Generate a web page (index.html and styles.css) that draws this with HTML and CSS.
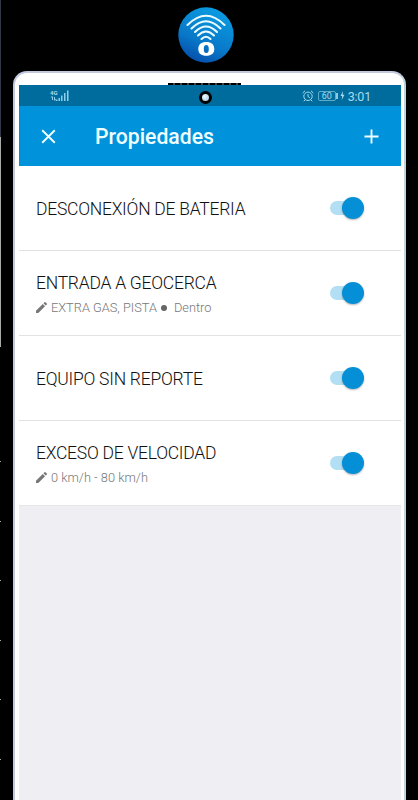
FILE: index.html
```
<!DOCTYPE html>
<html lang="es">
<head>
<meta charset="utf-8">
<title>Propiedades</title>
<link rel="stylesheet" href="styles.css">
</head>
<body>
<div class="edge"><i></i><i></i><i></i><i></i><i></i><i></i></div>
<svg class="logo" viewBox="0 0 56 56">
  <defs><linearGradient id="g" x1=".2" y1="1" x2=".65" y2="0"><stop offset="0" stop-color="#0649a8"/><stop offset=".4" stop-color="#0878c8"/><stop offset="1" stop-color="#0a9ce2"/></linearGradient></defs>
  <circle cx="28" cy="28" r="27.7" fill="url(#g)"/>
  <g fill="none" stroke="#e9fbff" stroke-width="2.100" stroke-linecap="round">
    <path d="M9.500 18Q28-.5 46.500 18"/>
    <path d="M13.500 21.500Q28 7 42.500 21.500"/>
    <path d="M17 25Q28 14 39 25"/>
    <path d="M20 28.500Q28 20.500 36 28.500"/>
    <path d="M23.500 32Q28 27.500 32.500 32"/>
  </g>
  <path fill="#fff" fill-rule="evenodd" d="M28.300 35c5 0 8 2.500 8 7s-3 6.800-8 6.800-8-2.300-8-6.800 3-7 8-7zm0 3c-1.800 0-2.500 1.500-2.500 4s.7 3.900 2.500 3.900 2.500-1.400 2.500-3.900-.7-4-2.500-4z"/>
</svg>
<main class="phone">
  <div class="speaker"></div>
  <div class="camera"></div>
  <div class="screen">
    <div class="status">
      <div class="network"><span class="gen">4G</span>
        <svg viewBox="0 0 19 12"><g fill="#8fd0e8"><path d="M1 7l1-1 1 1v3H2V8zM4 7h1v2h1l-1 2-1-1z"/><path d="M6 9.500h1.500V11H6zM8.500 8H10v3H8.500zM11 5.500h1.500V11H11zM14 3h1.500v8H14zM17 .5h1.500V11H17z"/></g></svg>
      </div>
      <div class="info">
        <svg class="alarm" viewBox="0 0 12 12" fill="none" stroke="#a6dcec"><circle cx="6" cy="6.300" r="4.200"/><path d="M6 4v2.500l1.800 1.200M.7 3L3 .8M11.300 3L9 .8M3 10l-1.200 1.300M9 10l1.200 1.300"/></svg>
        <span class="battery">60</span>
        <svg class="bolt" viewBox="0 0 5 9"><path d="M3 0L.5 5H2.200L1.700 9 4.500 3.800H2.700z" fill="#a6dcec"/></svg>
        <span class="time">3:01</span>
      </div>
    </div>
    <header class="bar">
      <svg class="close" viewBox="0 0 16 16"><path d="M1.300 1.300l13.400 13.400M14.700 1.300L1.300 14.700"/></svg>
      <h1>Propiedades</h1>
      <svg class="add" viewBox="0 0 16 16"><path d="M8 .5v15M.5 8h15"/></svg>
    </header>
    <section class="row"><div><h2>DESCONEXIÓN DE BATERIA</h2></div><span class="switch"></span></section>
    <section class="row"><div><h2>ENTRADA A GEOCERCA</h2><p><svg class="pencil" viewBox="3 3 18 18"><path d="M3 17.250V21h3.750L17.810 9.940l-3.750-3.750zM20.710 7.040a1 1 0 0 0 0-1.410l-2.340-2.340a1 1 0 0 0-1.410 0l-1.830 1.830 3.750 3.750z"/></svg><span>EXTRA GAS, PISTA</span><i class="dot"></i><span>Dentro</span></p></div><span class="switch"></span></section>
    <section class="row"><div><h2>EQUIPO SIN REPORTE</h2></div><span class="switch"></span></section>
    <section class="row"><div><h2>EXCESO DE VELOCIDAD</h2><p><svg class="pencil" viewBox="3 3 18 18"><path d="M3 17.250V21h3.750L17.810 9.940l-3.750-3.750zM20.710 7.040a1 1 0 0 0 0-1.410l-2.340-2.340a1 1 0 0 0-1.410 0l-1.830 1.830 3.750 3.750z"/></svg><span>0 km/h - 80 km/h</span></p></div><span class="switch"></span></section>
  </div>
</main>
</body>
</html>
```
FILE: styles.css
```
* { box-sizing: border-box; }
body { margin: 0; height: 800px; overflow: hidden; background: #000; font-family: Roboto, sans-serif; position: relative; }
svg { display: block; flex: none; }
h1, h2, p { margin: 0; white-space: nowrap; }
.edge { position: absolute; left: 0; top: 0; width: 1px; height: 800px; padding-top: 461px; background: linear-gradient(#333745 137px, #a9a9a9 137px, #a9a9a9 347px, #000 347px); display: flex; flex-direction: column; gap: 58.6px; }
.edge i { height: 1px; flex: none; background: #aaa; }
.logo { width: 56px; height: 56px; margin: 7px 0 0 178px; }
.phone { position: relative; width: 393px; height: 740px; margin: 8px 0 0 13px; padding: 12px 3px 0 4px; border: 2px solid #c2c9df; border-right-color: #c0d4df; border-bottom: 0; border-radius: 14px 14px 0 0; background: #fff; }
.speaker { position: absolute; left: 153px; top: 10px; width: 73px; height: 2px; background: repeating-linear-gradient(90deg, #000 0 5px, #44434a 5px 7px); }
.camera { position: absolute; left: 184px; top: 18px; width: 13px; height: 13px; border: 3px solid #000; border-radius: 50%; background: radial-gradient(circle at 35% 35%, #f0fbff, #9fc5dd); }
.screen { height: 726px; width: 382px; background: #eeeef3; }
.status { height: 21px; background: #006b9d; display: flex; justify-content: space-between; padding: 0 30px 0 31px; color: #a6dcec; }
.network { display: flex; align-items: flex-start; padding-top: 5px; }
.network svg { width: 19px; height: 12px; margin-left: -7px; }
.gen { font-size: 6px; line-height: 6px; font-weight: 700; width: 7px; }
.info { display: flex; align-items: center; }
.alarm { width: 12px; height: 12px; }
.battery { position: relative; width: 18px; height: 10px; margin-left: 4px; border: 1px solid #5aaecb; border-radius: 2px; font-size: 9px; line-height: 9px; text-align: center; }
.battery::after { content: ""; position: absolute; left: 17px; top: 1px; width: 2px; height: 6px; background: #8acbe0; }
.bolt { width: 5px; height: 9px; margin: 0 3px 0 4px; }
.time { font-size: 12.5px; line-height: 21px; padding-top: 1px; letter-spacing: -.2px; }
.bar { height: 60px; background: #0093db; display: flex; align-items: center; padding: 0 22px; color: #f0ffff; }
.bar svg { width: 15px; height: 15px; fill: none; stroke: #f0ffff; stroke-width: 2; }
.bar h1 { flex: 1; margin-left: 39px; padding-top: 1px; font-size: 21.2px; line-height: 24px; font-weight: 500; }
.row { height: 85px; background: #fff; border-bottom: 1px solid #e2e2e2; display: flex; align-items: center; justify-content: space-between; padding: 0 37px 0 17px; }
.row:last-child { border-color: #e6e6e9; }
h2 { padding-top: 2px; font-size: 17.5px; font-weight: 350; line-height: 24px; letter-spacing: -.25px; color: #111; }
p { display: flex; align-items: center; margin-top: 3px; font-size: 12.8px; line-height: 20px; color: #777; font-weight: 350; }
.pencil { width: 11px; height: 11px; margin-right: 4px; fill: #777; }
.dot { width: 6px; height: 6px; border-radius: 50%; background: #666; margin: 0 7px 0 4px; }
.switch { position: relative; width: 34px; height: 22px; flex: none; }
.switch::before { content: ""; position: absolute; left: 0; top: 4px; width: 26px; height: 14px; border-radius: 7px; background: #b2dff3; }
.switch::after { content: ""; position: absolute; left: 12px; top: 0; width: 22px; height: 22px; border-radius: 50%; background: #058fd6; box-shadow: 0 1px 2px rgba(0,0,0,.3); }
```
